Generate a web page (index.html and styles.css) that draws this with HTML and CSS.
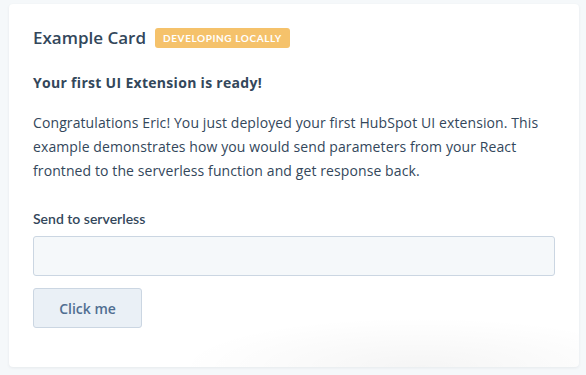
FILE: index.html
```html
<!DOCTYPE html>
<html lang="en">
<head>
    <meta charset="UTF-8">
    <meta name="viewport" content="width=device-width, initial-scale=1.0">
    <title>Example Card</title>
    <link rel="stylesheet" href="styles.css">
</head>
<body>
    <div class="card">
        <div class="card-header">
            <h1 class="card-title">Example Card</h1>
            <span class="badge">Developing locally</span>
        </div>

        <h2 class="subtitle">Your first UI Extension is ready!</h2>
        <p class="intro">Congratulations Eric! You just deployed your first HubSpot UI extension. This example demonstrates how you would send parameters from your React frontned to the serverless function and get response back.</p>

        <label class="field-label" for="payload">Send to serverless</label>
        <input class="field-input" id="payload" type="text">

        <button class="btn">Click me</button>
    </div>
</body>
</html>
```

FILE: styles.css
```css
body {
    margin: 0;
    padding: 4px 7px 8px 9px;
    background-color: #f5f8fa;
    font-family: "Open Sans", Lato, Arial, sans-serif;
    color: #33475b;
}
.card {
    box-sizing: border-box;
    height: 363px;
    padding: 24px;
    background-color: #fff;
    background-image: radial-gradient(ellipse 240px 50px at 72% 100%, rgba(0,0,0,0.04), rgba(0,0,0,0));
    border-radius: 4px;
    box-shadow: 0 1px 3px rgba(45,62,80,0.08);
}
.card-header {
    display: flex;
    align-items: center;
    gap: 9px;
}
.card-title {
    margin: 0;
    font-size: 17px;
    line-height: 20px;
    font-weight: 600;
}
.badge {
    padding: 0 8px;
    height: 20px;
    line-height: 20px;
    border-radius: 3px;
    background-color: #f5c26b;
    color: #fff;
    font-family: Lato, Arial, sans-serif;
    font-size: 10px;
    font-weight: 700;
    letter-spacing: 0.6px;
    text-transform: uppercase;
}
.subtitle {
    margin: 23px 0 0;
    font-size: 14px;
    line-height: 24px;
    font-weight: 700;
    letter-spacing: 0.3px;
}
.intro {
    margin: 16px 0 0;
    font-size: 14px;
    line-height: 24px;
    font-weight: 400;
    letter-spacing: 0.1px;
}
.field-label {
    display: block;
    margin-top: 24px;
    font-family: Lato, Arial, sans-serif;
    font-size: 14px;
    line-height: 24px;
    font-weight: 600;
}
.field-input {
    display: block;
    box-sizing: border-box;
    width: 100%;
    height: 40px;
    margin-top: 5px;
    background-color: #f5f8fa;
    border: 1px solid #cbd6e2;
    border-radius: 3px;
}
.btn {
    display: block;
    margin-top: 12px;
    width: 109px;
    height: 40px;
    background-color: #eaf0f6;
    border: 1px solid #cbd6e2;
    border-radius: 3px;
    color: #506e91;
    font-family: "Open Sans", Arial, sans-serif;
    font-size: 14px;
    font-weight: 600;
}
```
